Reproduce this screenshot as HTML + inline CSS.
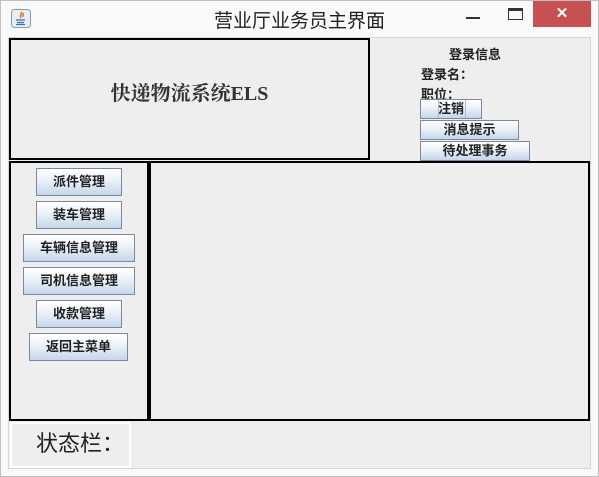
<!DOCTYPE html>
<html><head><meta charset="utf-8"><style>
*{margin:0;padding:0;box-sizing:border-box}
body{width:599px;height:477px;position:relative;background:#f9f9f9;overflow:hidden;font-family:"Liberation Sans","Noto Sans CJK SC",sans-serif}
.a{position:absolute}
.frame{left:0;top:0;width:599px;height:477px;border:1px solid #bfbfbf}
.title{left:0;width:599px;top:6px;text-align:center;font-size:19px;color:#222}
.content{left:8px;top:37px;width:583px;height:432px;background:#eeeeee;border:1px solid #d6d6d6}
.box{border:2px solid #000}
.btn{position:absolute;border:1px solid #7a8a9e;background:linear-gradient(#ffffff,#eef3f9 40%,#c5d6ea);font-size:13px;font-weight:bold;color:#222;text-align:center;font-family:"Liberation Sans","WenQuanYi Zen Hei","Noto Sans CJK SC",sans-serif}
.lbl{font-size:13px;font-weight:bold;color:#222;font-family:"Liberation Sans","WenQuanYi Zen Hei","Noto Sans CJK SC",sans-serif}
</style></head><body>
<div class="a frame"></div>
<svg class="a" style="left:11px;top:9px" width="20" height="19"><rect x="0.5" y="0.5" width="19" height="18" rx="3" fill="#e8eef5" stroke="#8a9bb0"/><path d="M10 3c2 2-2 3 0 6M12 4c1 2-1 3 0 4" stroke="#e07020" fill="none" stroke-width="1.5"/><path d="M5 11h9M6 13.5h7M5 15.5h9" stroke="#3a6ea5" stroke-width="1.2"/></svg>
<div class="a title">营业厅业务员主界面</div>
<div class="a" style="left:466px;top:17px;width:14px;height:2px;background:#333"></div>
<div class="a" style="left:508px;top:8px;width:15px;height:12px;border:1px solid #333;border-top-width:3px"></div>
<div class="a" style="left:533px;top:1px;width:58px;height:26px;background:#c75050;color:#fff;text-align:center;font-size:15px;line-height:26px;font-weight:bold">✕</div>
<div class="a content"></div>
<div class="a box" style="left:9px;top:38px;width:361px;height:122px"></div>
<div class="a" style="left:9px;top:77px;width:361px;text-align:center;font-size:20px;font-weight:bold;color:#333;font-family:'Liberation Serif','Noto Serif CJK SC',serif">快递物流系统ELS</div>
<div class="a lbl" style="left:420px;top:44px;width:110px;text-align:center">登录信息</div>
<div class="a lbl" style="left:421px;top:64px">登录名：</div>
<div class="a lbl" style="left:421px;top:84px">职位：</div>
<div class="btn" style="left:420px;top:99px;width:62px;height:20px;line-height:18px">注销<div class="a" style="left:17px;top:0;width:1px;height:18px;background:#aabbd0"></div><div class="a" style="left:44px;top:0;width:1px;height:18px;background:#aabbd0"></div></div>
<div class="btn" style="left:420px;top:120px;width:99px;height:20px;line-height:18px">消息提示</div>
<div class="btn" style="left:420px;top:141px;width:110px;height:20px;line-height:18px">待处理事务</div>
<div class="a box" style="left:9px;top:161px;width:140px;height:260px"></div>
<div class="a box" style="left:149px;top:161px;width:441px;height:260px"></div>
<div class="btn" style="left:36px;top:168px;width:86px;height:28px;line-height:26px">派件管理</div>
<div class="btn" style="left:36px;top:201px;width:86px;height:28px;line-height:26px">装车管理</div>
<div class="btn" style="left:23px;top:234px;width:112px;height:28px;line-height:26px">车辆信息管理</div>
<div class="btn" style="left:23px;top:267px;width:112px;height:28px;line-height:26px">司机信息管理</div>
<div class="btn" style="left:36px;top:300px;width:86px;height:28px;line-height:26px">收款管理</div>
<div class="btn" style="left:29px;top:333px;width:99px;height:28px;line-height:26px">返回主菜单</div>
<div class="a" style="left:10px;top:422px;width:121px;height:46px;border:2px solid #fff"></div>
<div class="a" style="left:36px;top:430px;font-size:22px;color:#222;line-height:28px">状态栏：</div>
</body></html>
